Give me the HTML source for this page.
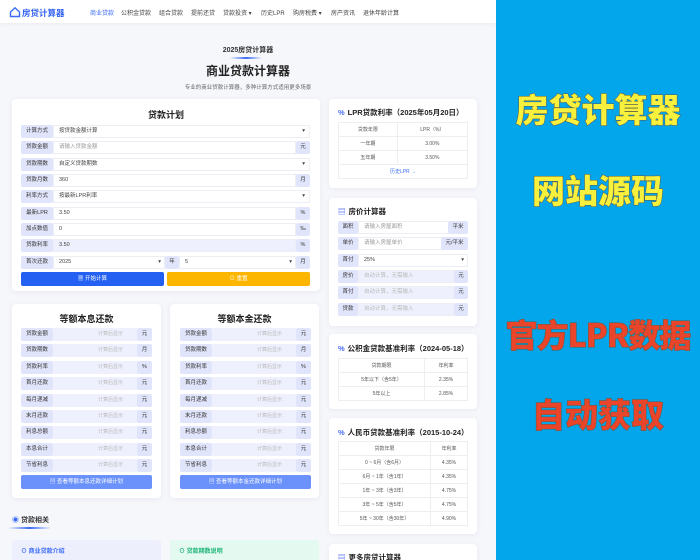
<!DOCTYPE html>
<html style="width:700px;height:560px;overflow:hidden"><head><meta charset="utf-8"><style>
*{margin:0;padding:0;box-sizing:border-box}
body{width:700px;height:560px;overflow:hidden;background:#f6f7fb;font-family:"Liberation Sans","Noto Sans CJK SC",sans-serif;color:#333;position:relative;font-size:6px}
.a{position:absolute}
.nav{left:0;top:0;width:496px;height:23px;background:#fff;box-shadow:0 1px 4px rgba(0,0,0,.05)}
.nav span{position:absolute;top:8px;font-size:6px;color:#444}
.card{position:absolute;background:#fff;border-radius:4px;box-shadow:0 1px 6px rgba(60,70,120,.08)}
.t{position:absolute;left:0;right:0;text-align:center;font-weight:bold;font-size:9px;color:#222}
.row{position:absolute;height:13px}
.lb{position:absolute;left:0;top:0;height:13px;width:32px;background:#e1e5fb;border-radius:2px;font-size:5.5px;line-height:13px;text-align:center;color:#333}
.in{position:absolute;top:0;height:13px;background:#fff;border:1px solid #eceef4;font-size:5.5px;line-height:11px;padding-left:5px;color:#444}
.un{position:absolute;top:0;height:13px;background:#e1e5fb;border-radius:2px;font-size:5.5px;line-height:13px;text-align:center;color:#333}
.rv{position:absolute;top:0;height:13px;background:#eef0fd;font-size:5px;line-height:13px;text-align:right;padding-right:14px;color:#bbb}
.ct{position:absolute;left:9px;font-weight:bold;font-size:7.5px;color:#222}
.ct i{font-style:normal;color:#4a6cf7;margin-right:3px}
table{position:absolute;border-collapse:collapse;font-size:5px;color:#555}
td{border:1px solid #eceef2;text-align:center;height:14px}
.bt{position:absolute;height:14px;border-radius:2px;color:#fff;font-size:5.5px;line-height:14px;text-align:center}
.side{left:496px;top:0;width:204px;height:560px;background:#03a6eb}
.big{position:absolute;left:496px;width:204px;text-align:center;font-weight:900;font-family:"Noto Sans CJK SC",sans-serif;-webkit-text-stroke:1px #5a5a4a;paint-order:stroke fill;white-space:nowrap}
</style></head><body>
<div class="a nav">
<svg class="a" style="left:9px;top:6px" width="12" height="12" viewBox="0 0 12 12"><path d="M1.5 6L6 1.8 10.5 6V10.5H1.5Z" fill="none" stroke="#3b6cf6" stroke-width="1.4"/></svg>
<span style="left:22px;top:7px;font-size:8.5px;font-weight:bold;color:#2f5ff0">房贷计算器</span>
<span style="left:90px;color:#3b6cf6">商业贷款</span>
<span style="left:121px">公积金贷款</span>
<span style="left:159px">组合贷款</span>
<span style="left:191px">提前还贷</span>
<span style="left:223px">贷款投资 ▾</span>
<span style="left:261px">历史LPR</span>
<span style="left:293px">购房税费 ▾</span>
<span style="left:331px">房产资讯</span>
<span style="left:363px">退休年龄计算</span>
</div>
<div class="a" style="left:0;width:496px;top:45px;text-align:center;font-weight:bold;font-size:7px;color:#333">2025房贷计算器</div>
<div class="a" style="left:230px;top:57px;width:32px;height:1.5px;background:linear-gradient(90deg,transparent,#3b6cf6,transparent)"></div>
<div class="a" style="left:0;width:496px;top:62px;text-align:center;font-weight:bold;font-size:12px;color:#222">商业贷款计算器</div>
<div class="a" style="left:0;width:496px;top:83px;text-align:center;font-size:5.5px;color:#666">专业的商业贷款计算器，多种计算方式适用更多场景</div>

<div class="card" style="left:12px;top:99px;width:308px;height:192px">
<div class="t" style="top:9px">贷款计划</div>
</div>
<div class="a" style="left:21px;top:125px">
<div class="row" style="top:0"><div class="lb">计算方式</div><div class="in" style="left:32px;width:257px">按贷款金额计算<span style="float:right;margin-right:4px">▾</span></div></div>
<div class="row" style="top:16px"><div class="lb">贷款金额</div><div class="in" style="left:32px;width:243px;color:#999">请输入贷款金额</div><div class="un" style="left:275px;width:14px">元</div></div>
<div class="row" style="top:33px"><div class="lb">贷款期数</div><div class="in" style="left:32px;width:257px">自定义贷款期数<span style="float:right;margin-right:4px">▾</span></div></div>
<div class="row" style="top:49px"><div class="lb">贷款月数</div><div class="in" style="left:32px;width:243px">360</div><div class="un" style="left:275px;width:14px">月</div></div>
<div class="row" style="top:65px"><div class="lb">利率方式</div><div class="in" style="left:32px;width:257px">按最新LPR利率<span style="float:right;margin-right:4px">▾</span></div></div>
<div class="row" style="top:82px"><div class="lb">最新LPR</div><div class="in" style="left:32px;width:243px">3.50</div><div class="un" style="left:275px;width:14px">%</div></div>
<div class="row" style="top:98px"><div class="lb">加点数值</div><div class="in" style="left:32px;width:243px">0</div><div class="un" style="left:275px;width:14px">‰</div></div>
<div class="row" style="top:114px"><div class="lb">贷款利率</div><div class="in" style="left:32px;width:243px;background:#eef0fd">3.50</div><div class="un" style="left:275px;width:14px">%</div></div>
<div class="row" style="top:131px"><div class="lb">首次还款</div><div class="in" style="left:32px;width:112px">2025<span style="float:right;margin-right:3px">▾</span></div><div class="un" style="left:144px;width:14px">年</div><div class="in" style="left:158px;width:117px">5<span style="float:right;margin-right:3px">▾</span></div><div class="un" style="left:275px;width:14px">月</div></div>
</div>
<div class="bt" style="left:21px;top:272px;width:143px;background:#2461f2">▦ 开始计算</div>
<div class="bt" style="left:167px;top:272px;width:143px;background:#fdb600">⊙ 重置</div>

<div class="card" style="left:12px;top:304px;width:149px;height:194px"><div class="t" style="top:8px">等额本息还款</div></div>
<div class="card" style="left:170px;top:304px;width:149px;height:194px"><div class="t" style="top:8px">等额本金还款</div></div>
<div class="a" style="left:21px;top:328px">
<div class="row" style="top:0"><div class="lb">贷款金额</div><div class="rv" style="left:32px;width:84px">计算后显示</div><div class="un" style="left:116px;width:15px">元</div></div>
<div class="row" style="top:16.4px"><div class="lb">贷款期数</div><div class="rv" style="left:32px;width:84px">计算后显示</div><div class="un" style="left:116px;width:15px">月</div></div>
<div class="row" style="top:32.8px"><div class="lb">贷款利率</div><div class="rv" style="left:32px;width:84px">计算后显示</div><div class="un" style="left:116px;width:15px">%</div></div>
<div class="row" style="top:49.2px"><div class="lb">首月还款</div><div class="rv" style="left:32px;width:84px">计算后显示</div><div class="un" style="left:116px;width:15px">元</div></div>
<div class="row" style="top:65.6px"><div class="lb">每月递减</div><div class="rv" style="left:32px;width:84px">计算后显示</div><div class="un" style="left:116px;width:15px">元</div></div>
<div class="row" style="top:82px"><div class="lb">末月还款</div><div class="rv" style="left:32px;width:84px">计算后显示</div><div class="un" style="left:116px;width:15px">元</div></div>
<div class="row" style="top:98.4px"><div class="lb">利息总额</div><div class="rv" style="left:32px;width:84px">计算后显示</div><div class="un" style="left:116px;width:15px">元</div></div>
<div class="row" style="top:114.8px"><div class="lb">本息合计</div><div class="rv" style="left:32px;width:84px">计算后显示</div><div class="un" style="left:116px;width:15px">元</div></div>
<div class="row" style="top:131.2px"><div class="lb">节省利息</div><div class="rv" style="left:32px;width:84px">计算后显示</div><div class="un" style="left:116px;width:15px">元</div></div>
<div class="bt" style="left:0;top:147px;width:131px;background:#6b92fb">▤ 查看等额本息还款详细计划</div>
</div>
<div class="a" style="left:180px;top:328px">
<div class="row" style="top:0"><div class="lb">贷款金额</div><div class="rv" style="left:32px;width:84px">计算后显示</div><div class="un" style="left:116px;width:15px">元</div></div>
<div class="row" style="top:16.4px"><div class="lb">贷款期数</div><div class="rv" style="left:32px;width:84px">计算后显示</div><div class="un" style="left:116px;width:15px">月</div></div>
<div class="row" style="top:32.8px"><div class="lb">贷款利率</div><div class="rv" style="left:32px;width:84px">计算后显示</div><div class="un" style="left:116px;width:15px">%</div></div>
<div class="row" style="top:49.2px"><div class="lb">首月还款</div><div class="rv" style="left:32px;width:84px">计算后显示</div><div class="un" style="left:116px;width:15px">元</div></div>
<div class="row" style="top:65.6px"><div class="lb">每月递减</div><div class="rv" style="left:32px;width:84px">计算后显示</div><div class="un" style="left:116px;width:15px">元</div></div>
<div class="row" style="top:82px"><div class="lb">末月还款</div><div class="rv" style="left:32px;width:84px">计算后显示</div><div class="un" style="left:116px;width:15px">元</div></div>
<div class="row" style="top:98.4px"><div class="lb">利息总额</div><div class="rv" style="left:32px;width:84px">计算后显示</div><div class="un" style="left:116px;width:15px">元</div></div>
<div class="row" style="top:114.8px"><div class="lb">本息合计</div><div class="rv" style="left:32px;width:84px">计算后显示</div><div class="un" style="left:116px;width:15px">元</div></div>
<div class="row" style="top:131.2px"><div class="lb">节省利息</div><div class="rv" style="left:32px;width:84px">计算后显示</div><div class="un" style="left:116px;width:15px">元</div></div>
<div class="bt" style="left:0;top:147px;width:131px;background:#6b92fb">▤ 查看等额本金还款详细计划</div>
</div>

<div class="a" style="left:12px;top:515px;font-size:7px;font-weight:bold;color:#333"><span style="color:#3b6cf6">◉</span> 贷款相关</div>
<div class="a" style="left:8px;top:527px;width:43px;height:1.5px;background:linear-gradient(90deg,transparent,#3b6cf6,transparent)"></div>
<div class="a" style="left:12px;top:540px;width:149px;height:20px;background:#eeeffd;border-radius:3px 3px 0 0;font-size:6px;color:#3b6cf6;padding:6px 9px;font-weight:bold">⊙ 商业贷款介绍</div>
<div class="a" style="left:170px;top:540px;width:149px;height:20px;background:#e4f9ef;border-radius:3px 3px 0 0;font-size:6px;color:#1fb57a;padding:6px 9px;font-weight:bold">⊙ 贷款期数说明</div>

<div class="card" style="left:329px;top:99px;width:148px;height:89px"><div class="ct" style="top:8px"><i>%</i>LPR贷款利率（2025年05月20日）</div>
<table style="left:9px;top:23px;width:130px"><tr><td>贷款年限</td><td>LPR（%）</td></tr><tr><td>一年期</td><td>3.00%</td></tr><tr><td>五年期</td><td>3.50%</td></tr><tr><td colspan="2" style="color:#3b6cf6">历史LPR →</td></tr></table></div>

<div class="card" style="left:329px;top:198px;width:148px;height:128px"><div class="ct" style="top:8px"><i>▤</i>房价计算器</div></div>
<div class="a" style="left:338px;top:221px">
<div class="row" style="top:0"><div class="lb" style="width:20px">面积</div><div class="in" style="left:20px;width:91px;color:#999">请输入房屋面积</div><div class="un" style="left:110px;width:20px">平米</div></div>
<div class="row" style="top:16.3px"><div class="lb" style="width:20px">单价</div><div class="in" style="left:20px;width:84px;color:#999">请输入房屋单价</div><div class="un" style="left:103px;width:27px">元/平米</div></div>
<div class="row" style="top:32.6px"><div class="lb" style="width:20px">首付</div><div class="in" style="left:20px;width:110px">25%<span style="float:right;margin-right:3px">▾</span></div></div>
<div class="row" style="top:48.9px"><div class="lb" style="width:20px">房价</div><div class="in" style="left:20px;width:96px;background:#eef0fd;color:#bbb">自动计算，无需输入</div><div class="un" style="left:116px;width:14px">元</div></div>
<div class="row" style="top:65.2px"><div class="lb" style="width:20px">首付</div><div class="in" style="left:20px;width:96px;background:#eef0fd;color:#bbb">自动计算，无需输入</div><div class="un" style="left:116px;width:14px">元</div></div>
<div class="row" style="top:81.5px"><div class="lb" style="width:20px">贷款</div><div class="in" style="left:20px;width:96px;background:#eef0fd;color:#bbb">自动计算，无需输入</div><div class="un" style="left:116px;width:14px">元</div></div>
</div>

<div class="card" style="left:329px;top:334px;width:148px;height:75px"><div class="ct" style="top:9px"><i>%</i>公积金贷款基准利率（2024-05-18）</div>
<table style="left:9px;top:24px;width:130px"><tr><td>贷款期限</td><td style="width:43px">年利率</td></tr><tr><td>5年以下（含5年）</td><td>2.35%</td></tr><tr><td>5年以上</td><td>2.85%</td></tr></table></div>

<div class="card" style="left:329px;top:418px;width:148px;height:116px"><div class="ct" style="top:9px"><i>%</i>人民币贷款基准利率（2015-10-24）</div>
<table style="left:9px;top:23px;width:130px"><tr><td>贷款年限</td><td style="width:37px">年利率</td></tr><tr><td>0 ~ 6月（含6月）</td><td>4.35%</td></tr><tr><td>6月 ~ 1年（含1年）</td><td>4.35%</td></tr><tr><td>1年 ~ 3年（含3年）</td><td>4.75%</td></tr><tr><td>3年 ~ 5年（含5年）</td><td>4.75%</td></tr><tr><td>5年 ~ 30年（含30年）</td><td>4.90%</td></tr></table></div>

<div class="card" style="left:329px;top:544px;width:148px;height:16px;border-radius:4px 4px 0 0"><div class="ct" style="top:8px"><i>▤</i>更多房贷计算器</div></div>

<div class="a side"></div>
<div class="big" style="top:89px;font-size:33px;line-height:38px;color:#f7f03c">房贷计算器</div>
<div class="big" style="top:170px;font-size:33px;line-height:38px;color:#f7f03c">网站源码</div>
<div class="big" style="top:315px;font-size:32px;line-height:38px;color:#e8452b;letter-spacing:-1px">官方LPR数据</div>
<div class="big" style="top:394px;font-size:33px;line-height:38px;color:#e8452b">自动获取</div>
</body></html>
